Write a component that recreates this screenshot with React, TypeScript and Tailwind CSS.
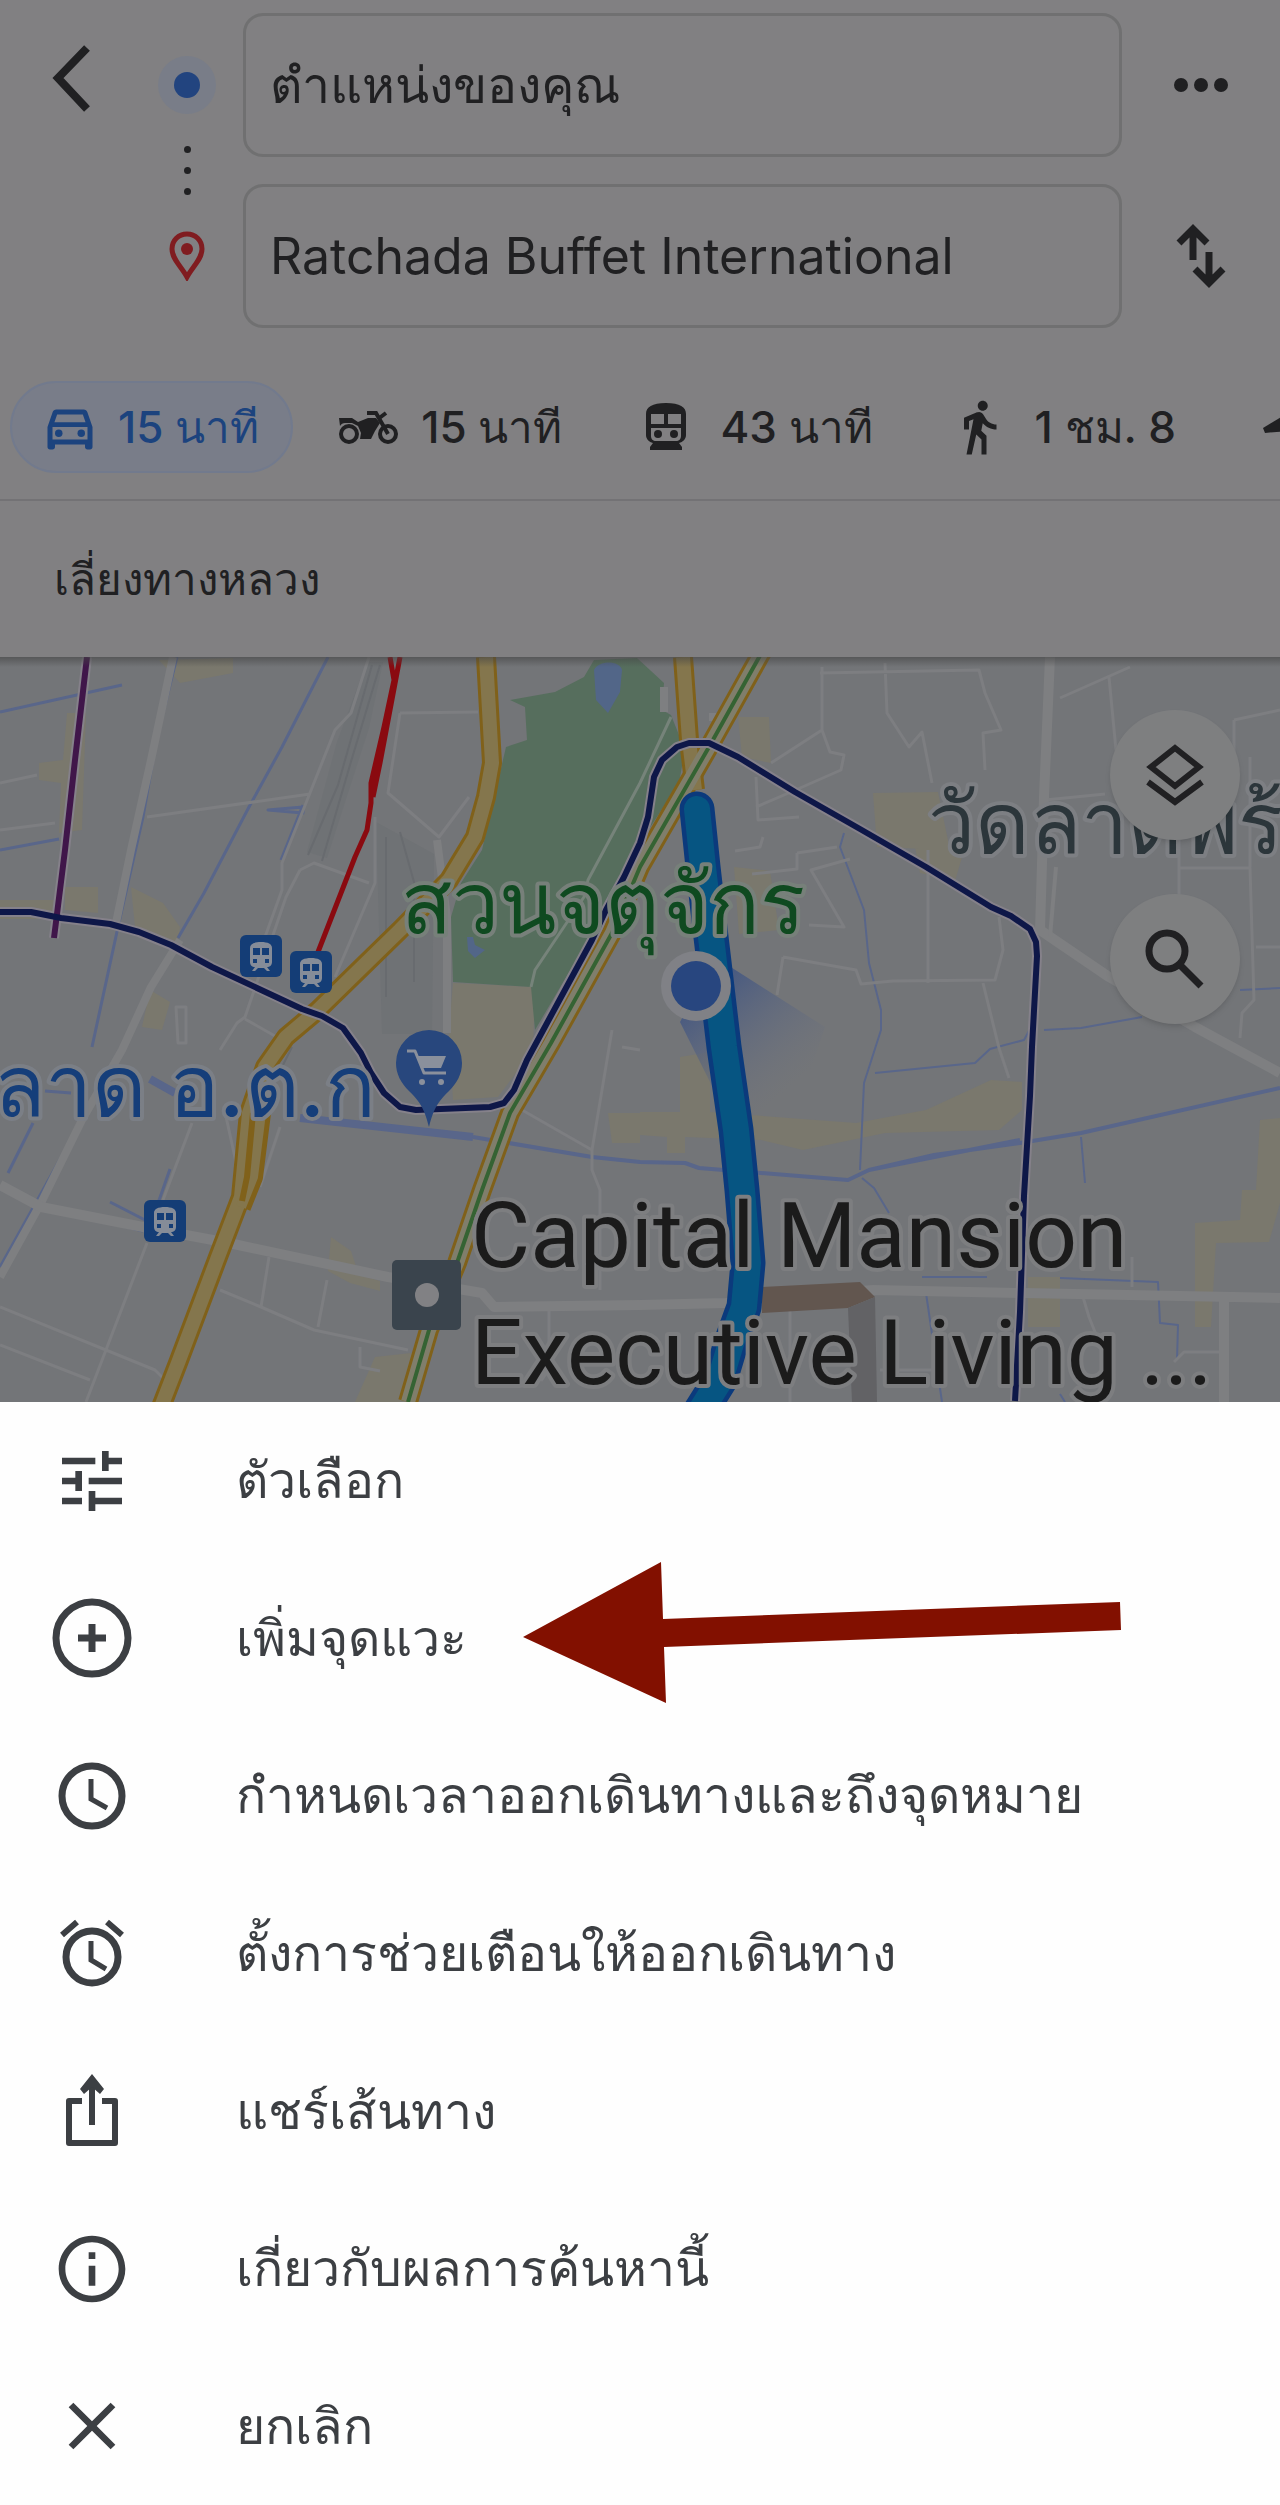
import React from 'react';
import { MdClose, MdDirectionsWalk, MdInfoOutline, MdOutlineDirectionsCar, MdTune } from 'react-icons/md';

interface IconProps {
  className?: string;
}

const BackIcon = ({ className }: IconProps) => (
  <svg viewBox="0 0 40 68" className={className} fill="none" stroke="currentColor" strokeWidth="8">
    <path d="M35 3 6 33l29 31" />
  </svg>
);

const MoreIcon = ({ className }: IconProps) => (
  <svg viewBox="0 0 54 14" className={className} fill="currentColor">
    <circle cx="7" cy="7" r="7" />
    <circle cx="27" cy="7" r="7" />
    <circle cx="47" cy="7" r="7" />
  </svg>
);

const SwapIcon = ({ className }: IconProps) => (
  <svg viewBox="0 0 50 66" className={className} fill="none" stroke="currentColor" strokeWidth="7">
    <path d="M17 37V6M3 20 17 6l14 14" />
    <path d="M33 29v31M19 46l14 14 14-14" />
  </svg>
);

const DestinationIcon = ({ className }: IconProps) => (
  <svg viewBox="0 0 36 50" className={className} fill="none">
    <path d="M18 3C9.500 3 3 9.500 3 18c0 10 9 17 15 28 6-11 15-18 15-28C33 9.500 26.500 3 18 3Z" stroke="currentColor" strokeWidth="5" />
    <circle cx="18" cy="18" r="6" fill="currentColor" />
  </svg>
);

const MotorbikeIcon = ({ className }: IconProps) => (
  <svg viewBox="0 0 60 34" className={className} fill="none" stroke="currentColor">
    <circle cx="10" cy="24" r="8" strokeWidth="4" />
    <circle cx="49" cy="24" r="8" strokeWidth="4" />
    <path d="M49 24 37 3h-9M39 9l8-6" strokeWidth="4" />
    <path d="M0 8h13l6 4 10-4h8l4 5-5 8-4 8H21l1-6-3-7-6-3H6c-2 0-4 1-5 3Z" fill="currentColor" stroke="none" />
  </svg>
);

const TrainIcon = ({ className }: IconProps) => (
  <svg viewBox="0 0 40 48" className={className} fill="currentColor">
    <path
      fillRule="evenodd"
      d="M20 0C6 0 0 4 0 11v21c0 4 3 7 7 8l-3 4v3h32v-3l-3-4c4-1 7-4 7-8V11C40 4 34 0 20 0ZM5 11h13v10H5Zm17 0h13v10H22ZM5 25h30v8c0 3-2 5-5 5H10c-3 0-5-2-5-5Z"
    />
    <circle cx="12" cy="31" r="4" />
    <circle cx="28" cy="31" r="4" />
  </svg>
);

const PlaneIcon = ({ className }: IconProps) => (
  <svg viewBox="0 0 60 60" className={className} fill="currentColor">
    <path d="M1 31 24 17l16-3 14 6-9 9-20 5L3 36Z" />
  </svg>
);

const LayersIcon = ({ className }: IconProps) => (
  <svg viewBox="0 0 60 64" className={className} fill="none" stroke="currentColor" strokeWidth="6">
    <path d="M30 5 54 24 30 43 6 24Z" />
    <path d="M3 39 30 59 57 39" />
  </svg>
);

const SearchIcon = ({ className }: IconProps) => (
  <svg viewBox="0 0 60 60" className={className} fill="none" stroke="currentColor" strokeWidth="7">
    <circle cx="22" cy="22" r="18" />
    <path d="M34 35 56 57" />
  </svg>
);

const AddStopIcon = ({ className }: IconProps) => (
  <svg viewBox="0 0 80 80" className={className} fill="none" stroke="currentColor" strokeWidth="7">
    <circle cx="40" cy="40" r="36" />
    <path d="M40 26v28M26 40h28" />
  </svg>
);

const ClockIcon = ({ className }: IconProps) => (
  <svg viewBox="0 0 80 80" className={className} fill="none" stroke="currentColor" strokeWidth="7">
    <circle cx="40" cy="40" r="30" />
    <path d="M39 23v20l16 9" strokeWidth="5" />
  </svg>
);

const AlarmIcon = ({ className }: IconProps) => (
  <svg viewBox="0 0 80 80" className={className} fill="none" stroke="currentColor" strokeWidth="7">
    <circle cx="40" cy="44" r="26" />
    <path d="M39 28v19l15 9" strokeWidth="5" />
    <path d="M10 22 25 9M70 22 55 9" strokeWidth="6" />
  </svg>
);

const ShareIcon = ({ className }: IconProps) => (
  <svg viewBox="0 0 80 80" className={className} fill="none" stroke="currentColor" strokeWidth="6">
    <path d="M30 30H17v42h46V30H50" strokeLinejoin="round" />
    <path d="M40 54V12" />
    <path d="M40 3 52 18l-4 5-8-7-8 7-4-5Z" fill="currentColor" stroke="none" />
  </svg>
);

const travelModes = [
  { label: '15 นาที', icon: MdOutlineDirectionsCar, iconClass: 'size-[60px] -ml-1 -mr-3', active: true },
  { label: '15 นาที', icon: MotorbikeIcon, iconClass: 'w-[60px] h-[34px] -mr-2' },
  { label: '43 นาที', icon: TrainIcon, iconClass: 'w-10 h-12 mx-1' },
  { label: '1 ชม. 8', icon: MdDirectionsWalk, iconClass: 'size-[60px] -mx-1' },
];

const menuItems = [
  { label: 'ตัวเลือก', icon: MdTune },
  { label: 'เพิ่มจุดแวะ', icon: AddStopIcon, highlighted: true },
  { label: 'กำหนดเวลาออกเดินทางและถึงจุดหมาย', icon: ClockIcon },
  { label: 'ตั้งการช่วยเตือนให้ออกเดินทาง', icon: AlarmIcon },
  { label: 'แชร์เส้นทาง', icon: ShareIcon },
  { label: 'เกี่ยวกับผลการค้นหานี้', icon: MdInfoOutline },
  { label: 'ยกเลิก', icon: MdClose },
];

const stations = [
  { x: 240, y: 278 },
  { x: 290, y: 294 },
  { x: 144, y: 543 },
];

const RouteForm = () => (
  <form className="grid grid-cols-[144px_86px_1fr_158px] pt-[13px]">
    <div className="flex h-36 items-center justify-center">
      <button type="button" aria-label="กลับ" className="-mt-3">
        <BackIcon className="h-[68px] w-10" />
      </button>
    </div>
    <div className="flex flex-col items-center justify-between py-[43px]">
      <span className="flex size-[58px] items-center justify-center rounded-full bg-[#797d88]">
        <span className="size-[26px] rounded-full bg-[#22447f]" />
      </span>
      <span className="flex flex-col gap-[14px]">
        <span className="size-[7px] rounded-full bg-[#202022]" />
        <span className="size-[7px] rounded-full bg-[#202022]" />
        <span className="size-[7px] rounded-full bg-[#202022]" />
      </span>
      <span className="flex h-[58px] items-center">
        <DestinationIcon className="h-[50px] w-9 text-[#801c20]" />
      </span>
    </div>
    <div className="ml-[13px] flex flex-col gap-[27px]">
      <input
        aria-label="จุดเริ่มต้น"
        defaultValue="ตำแหน่งของคุณ"
        className="h-36 w-full rounded-[20px] border-[3px] border-[#707071] bg-transparent px-6 text-[50px] outline-none"
      />
      <input
        aria-label="ปลายทาง"
        defaultValue="Ratchada Buffet International"
        className="h-36 w-full rounded-[20px] border-[3px] border-[#707071] bg-transparent px-6 text-[50px] outline-none"
      />
    </div>
    <div className="flex flex-col gap-[27px]">
      <button type="button" aria-label="เพิ่มเติม" className="flex h-36 items-center justify-center">
        <MoreIcon className="h-[14px] w-[54px]" />
      </button>
      <button type="button" aria-label="สลับ" className="flex h-36 items-center justify-center">
        <SwapIcon className="h-[66px] w-[50px]" />
      </button>
    </div>
  </form>
);

const TravelModes = () => (
  <nav className="mt-[53px] flex items-center gap-3 overflow-hidden border-b-2 border-[#737275] pb-[26px] pl-[10px]">
    {travelModes.map((mode, index) => (
      <button
        key={index}
        type="button"
        className={`flex h-[92px] shrink-0 items-center gap-[30px] rounded-full border-2 px-8 text-[44px] font-medium whitespace-nowrap ${mode.active ? 'border-[#727a8d] bg-[#797d89] text-[#1c437e]' : 'border-transparent'}`}
      >
        <mode.icon className={mode.iconClass} />
        {mode.label}
      </button>
    ))}
    <button type="button" aria-label="เที่ยวบิน" className="shrink-0 pl-10">
      <PlaneIcon className="size-[60px]" />
    </button>
  </nav>
);

const RouteMap = () => (
  <section className="relative overflow-hidden text-[#202022]">
    <svg viewBox="0 0 1280 745" className="block h-auto w-full bg-[#737578]" fill="none" strokeLinejoin="round">
      <defs>
        <linearGradient id="beam" gradientUnits="userSpaceOnUse" x1="710" y1="335" x2="790" y2="430">
          <stop offset="0" stopColor="#4a5b80" />
          <stop offset="1" stopColor="#6a7080" stopOpacity="0" />
        </linearGradient>
        <linearGradient id="edge" x1="0" y1="0" x2="0" y2="1">
          <stop offset="0" stopColor="#444" stopOpacity=".6" />
          <stop offset="1" stopColor="#444" stopOpacity="0" />
        </linearGradient>
      </defs>

      {/* built-up areas */}
      <g fill="#7a786d">
        <path d="M67 56h19l-4 117-23 3 2-50-22-3v-17l24-3ZM0 243h55v19H0ZM65 230h33v26l-33-3ZM131 230l32 16 17 24-4 23-41-23ZM159 3l74-2v15l-53 10Z" />
        <path d="m453 326 82 4-2 63-35 47-45 3-4-70Z" />
        <path d="m873 136 65-1 12 58-73-3ZM738 60h31l2 46-29-6ZM734 210l36 4 9 59-40 4ZM915 190h50l-10 34-35-8Z" />
        <path d="m680 400 30-5v60l146 11 70-13 65-30 31 2v28l-23 20-114 3-82 17-42-10-76-3v16h-18v-16l-27-2v-23h40Z" />
        <path d="m1260 463 20-2v85l-11 39-53 1-5 84h-16V566l45-3 2-30h14ZM1028 620h32v50h-32ZM331 580l20 14 8 24 21 6v10l-30-8-22-12ZM420 695l-45 5-20 45h50ZM608 456h32v30h-28ZM150 333l20 12-8 28-20-3Z" />
      </g>

      {/* railway yard */}
      <path d="m367 5-30 80-30 110 20 6 42-130 14-66ZM376 165l58 32-2 180h-50Z" fill="#6f7275" />
      <path d="m372 8-34 120-30 70M380 8l-30 100-28 96M386 180v160M400 175l14 50v100M245 440l45-60M262 450l30-60" stroke="#686b6f" strokeWidth="2" />

      {/* parks and ponds */}
      <path d="m510 43 45-8 29-15 10-17 43-2 27 25-2 27 9 5 14 35-6 33-39 60-52 97-53 90-4-43-78-5-2-65 10-34 21-33 24-103 21-7-2-33Z" fill="#566e5d" />
      <path d="M594 13c4-10 26-10 28 0l-2 22-12 21-12-13Z" fill="#526688" />
      <path d="M467 280h6l2 8 10 5-10 8-7-7Z" fill="#526688" />
      <path d="m671 60-31 66-52 97-4 17-49 73-4 17" stroke="#76837a" strokeWidth="3" />

      {/* canals */}
      <g stroke="#59668a" strokeWidth="3">
        <path d="m328 0-46 90-33 60-45 86-26 45M0 55l122-27M0 193l59-11M177 0l-20 80-14 80-25 110-26 120M303 148l-22 55M268 153l35-3v6Z" />
        <path d="m33 466-25 50M82 463 0 610M170 512l-14 40M110 545l35 18M41 548l102 26M45 434l26 2" />
        <path d="m844 176-4 14 24 63 5 53 12 47v20l-17 53-4 87M875 416l100-10 15-14 34-9 12-22M1044 373l37-2 61-11M1240 333l40-2" strokeWidth="2" />
        <path d="M1081 480l4 46M862 521l12 10 15 25M922 620h65M926 636l16 109M1060 621l98 4 2 41 18 2-1 35M1065 745l-5-8" strokeWidth="2" />
        <path d="m300 461 173 19M150 422l25 14" strokeWidth="8" />
        <path d="m473 480 119 20 48 5 45 1 14 5 149 12 21-10 65-15 86-12 61-10 199-45M869 513l151-30" strokeWidth="4" />
      </g>

      {/* minor streets */}
      <g stroke="#7d7e81" strokeWidth="3">
        <path d="m147 160 163-23M0 126l37-8M0 173l55-7M369 0l-18 56-16 17-29 73-24 60v27l-17 47M300 213l14-7 55 20M300 213l-14 27-41 120-8 6-17 27M245 362l37 21M375 160v66l-40 94M400 56l-12 80 51 44 30-40M400 56l78-1M176 350h10v36h-8Z" />
        <path d="m820 16 159-3 6 23 16 37-18 3 2 37M822 10v63l-51 33M822 73l8 22 14 3-3 15-50 22-35 15M885 6l2 50 22 34 13-15 10 51M756 120l2 43 41-3M763 180l-3 10-25 4M797 196l40-6M797 196v16l-45 5M850 202l-39 11 33 57-35-2M783 300l73 13 5 14 32-3 102-1 8-30-4-33M783 300l-6 38M928 193v133M983 326l16 65 10 30" />
        <path d="m1109 20 7 73M1060 41l70-31M1234 63l46-10M1234 63v50M1179 211h71l4 132-12 13-2 25M1179 140v130M1256 290h24M1250 100v110M1045 143l60-6" />
        <path d="m0 650 155 63 20 20M0 688l90 35M147 586 86 745M220 633l41 17 53 23 94 20M269 600l-8 50M327 623l-9 47M360 690v20l20 4M192 466l-29 77M225 455l12 55M280 470l-20 60M522 453l70 40 20-120M592 493v20l8 20v100M622 390l18 3M1083 640l6 20 20 50M1132 600v30M1224 695h-40l-10 10M880 713h60M790 650v95M549 652v60l-8 12" />
      </g>

      {/* streets */}
      <g stroke="#7e7f81" strokeWidth="10">
        <path d="m173 0-22 103-20 90-15 73M180 283l-29 47-29 63-40 70-41 83L0 620" strokeWidth="8" />
        <path d="m437 183 10 77v116" strokeWidth="8" />
        <path d="m1050 0-6 140-4 133 69 47 86 50 85 46" />
        <path d="m1056 210-6 70" strokeWidth="4" />
        <path d="m0 528 41 22 102 20 86 16 159 34 94 16 12 14 146-2 86-2 147-13 151 3 256 5M1224 640v105" />
        <path d="M664 30v25M709 60h10v20" strokeWidth="8" />
      </g>

      {/* building */}
      <path d="m762 630 98-5 15 15-27 11-86 5Z" fill="#62564f" />
      <path d="m848 651 27-11 2 105h-25Z" fill="#626265" />

      {/* expressways */}
      <g stroke="#80611a" strokeWidth="20">
        <path d="m486 0 6 106-6 34-11 40-26 43-49 50-82 80-32 27-21 30-16 46-8 84-23 60-40 106-17 44M683 0l6 83 6 50" />
        <path d="m261 456-8 64-12 30" />
        <path d="m762-5-53 95-69 120-28 66-61 110-41 70-28 77-25 73-28 67-21 72" />
      </g>
      <g stroke="#84764d" strokeWidth="14">
        <path d="m486 0 6 106-6 34-11 40-26 43-49 50-82 80-32 27-21 30-16 46-8 84-23 60-40 106-17 44M683 0l6 83 6 50" />
        <path d="m261 456-8 64-12 30" strokeWidth="10" />
        <path d="m762-5-53 95-69 120-28 66-61 110-41 70-28 77-25 73-28 67-21 72" stroke="#807e6b" />
      </g>
      <path d="m253 456-6 64-5 24" stroke="#80611a" strokeWidth="6" />
      <path d="m762-5-53 95-69 120-28 66-61 110-41 70-28 77-25 73-28 67-21 72" stroke="#356333" strokeWidth="4" />

      {/* rail lines */}
      <g strokeWidth="10" stroke="#85818a">
        <path d="m87 0-12 103-10 90-11 88" />
        <path d="M0 255h31l30 6 49 6 29 8 32 13 41 22 90 42 20 7 21 12 18 25 10 20 13 20 16 14 16 3 74-3 14-4 10-13 13-30 65-120 14-30 18-33 16-34 8-26 6-40 8-17 15-13 12-4h20l29 14 57 35 65 37 66 38 65 40 20 9 19 13 6 13 1 14-5 91-2 49-6 100-4 116-5 89" />
      </g>
      <path d="m87 0-12 103-10 90-11 88" stroke="#40164a" strokeWidth="6" />
      <path d="m390 0 4 23-10 47-13 56v20l-4 27-12 27-37 95M400 0l-20 106-7 34" stroke="#8a0a10" strokeWidth="5" />

      {/* heading beam */}
      <path d="m715 300 110 70-30 90-70-5-45-90Z" fill="url(#beam)" />

      {/* selected route */}
      <path d="m697 152 6 58 8 70 13 110 12 83 6 60 6 73-4 44-12 33-12 40-20 32" stroke="#0b3a7c" strokeWidth="35" strokeLinecap="round" />
      <path d="m697 152 6 58 8 70 13 110 12 83 6 60 6 73-4 44-12 33-12 40-20 32" stroke="#065582" strokeWidth="26" strokeLinecap="round" />
      <path d="M0 255h31l30 6 49 6 29 8 32 13 41 22 90 42 20 7 21 12 18 25 10 20 13 20 16 14 16 3 74-3 14-4 10-13 13-30 65-120 14-30 18-33 16-34 8-26 6-40 8-17 15-13 12-4h20l29 14 57 35 65 37 66 38 65 40 20 9 19 13 6 13 1 14-5 91-2 49-6 100-4 116-5 89" stroke="#0e1748" strokeWidth="6" />

      {/* place labels */}
      <g strokeWidth="8" paintOrder="stroke" fontFamily="Inter, 'Noto Sans', sans-serif" fontSize="84" fontWeight="500">
        <text x="401" y="276" fill="#0f4a20" stroke="#77807a">สวนจตุจักร</text>
        <text x="928" y="196" fill="#2c363b" stroke="#7d7f83">วัดลาดพร้าว</text>
        <text x="376" y="459" textAnchor="end" fill="#153e7a" stroke="#7b7f86">ลาด อ.ต.ก</text>
      </g>
      <g strokeWidth="8" paintOrder="stroke" fontFamily="Roboto, sans-serif" fontSize="91" fill="#1b1b1b" stroke="#7d7e80">
        <text x="471" y="610">Capital Mansion</text>
        <text x="471" y="727">Executive Living ...</text>
      </g>

      {/* current position */}
      <circle cx="696" cy="329" r="35" fill="#808186" />
      <circle cx="696" cy="329" r="25" fill="#28467f" />

      {/* pins */}
      {stations.map((station) => (
        <g key={`${station.x}-${station.y}`} transform={`translate(${station.x} ${station.y})`}>
          <rect width="42" height="42" rx="6" fill="#143d76" />
          <path d="M10 13c0-4 4-6 11-6s11 2 11 6v14c0 3-2 5-5 5l3 4h-3l-3-3h-6l-3 3h-3l3-4c-3 0-5-2-5-5Z" fill="#858c98" />
          <path d="M13 13h7v7h-7ZM22 13h7v7h-7ZM13 24h4v4h-4ZM25 24h4v4h-4Z" fill="#143d76" />
        </g>
      ))}
      <path d="M429 470c-5-20-10-26-20-36-8-8-13-17-13-28a33 33 0 0 1 66 0c0 11-5 20-13 28-10 10-15 16-20 36Z" fill="#28477d" />
      <path d="M407 394h8l9 22h22" stroke="#8a909c" strokeWidth="3" />
      <path d="M417 399h29l-5 12h-20Z" fill="#8a909c" />
      <circle cx="422" cy="425" r="3" fill="#8a909c" />
      <circle cx="441" cy="425" r="3" fill="#8a909c" />
      <rect x="392" y="603" width="69" height="70" rx="5" fill="#3a444d" />
      <circle cx="427" cy="638" r="12" fill="#818184" />

      <rect width="1280" height="10" fill="url(#edge)" />
    </svg>
    <div className="absolute top-[53px] right-10 flex flex-col gap-[54px]">
      <button type="button" aria-label="เลเยอร์" className="flex size-[130px] items-center justify-center rounded-full bg-[#7e7f80] shadow-md">
        <LayersIcon className="h-16 w-[60px]" />
      </button>
      <button type="button" aria-label="ค้นหา" className="flex size-[130px] items-center justify-center rounded-full bg-[#7e7f80] shadow-md">
        <SearchIcon className="size-[60px]" />
      </button>
    </div>
  </section>
);

const RouteMenu = () => (
  <ul className="grid flex-1 auto-rows-fr bg-[#fefefe] text-[#3c3f43]">
    {menuItems.map((item) => (
      <li key={item.label} className="relative">
        <button type="button" className="flex size-full min-h-32 items-center gap-[104px] pl-[52px] text-left text-[50px] whitespace-nowrap">
          <item.icon className="size-20 shrink-0" />
          {item.label}
        </button>
        {item.highlighted && (
          <svg viewBox="0 0 598 141" className="pointer-events-none absolute top-[2px] left-[523px] w-[598px]">
            <path d="M0 75 138 0l2 57 457-17 1 28-457 17 2 56Z" fill="#821000" />
          </svg>
        )}
      </li>
    ))}
  </ul>
);

const App = () => {
  return (
    <main className="flex min-h-screen flex-col font-[Inter,'Noto_Sans',sans-serif]">
      <header className="bg-[#818082] text-[#202022]">
        <RouteForm />
        <TravelModes />
        <p className="flex h-[156px] items-center pl-[54px] text-[44px]">เลี่ยงทางหลวง</p>
      </header>
      <RouteMap />
      <RouteMenu />
    </main>
  );
};

export default App;
